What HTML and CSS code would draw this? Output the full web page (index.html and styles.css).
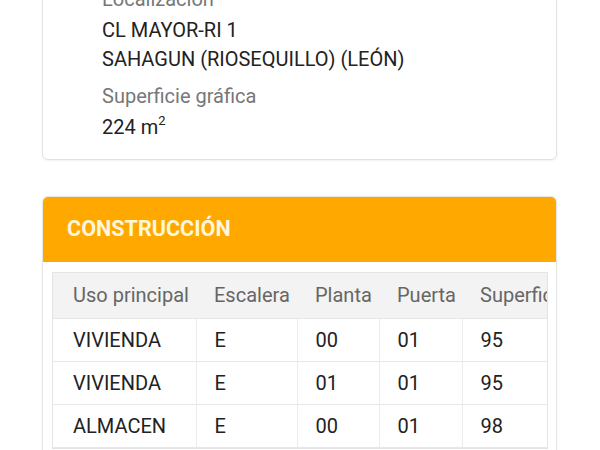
FILE: index.html
```html
<!DOCTYPE html>
<html lang="es">
<head>
<meta charset="utf-8">
<link rel="stylesheet" href="styles.css">
</head>
<body>
<div class="page">
  <section class="card info-card">
    <div class="field">
      <div class="label">Localización</div>
      <div class="value">CL MAYOR-RI 1<br>SAHAGUN (RIOSEQUILLO) (LEÓN)</div>
    </div>
    <div class="field">
      <div class="label">Superficie gráfica</div>
      <div class="value">224 m<sup>2</sup></div>
    </div>
  </section>

  <section class="card table-card">
    <header class="card-head">CONSTRUCCIÓN</header>
    <div class="card-body">
      <div class="table-wrap">
        <table class="data">
          <colgroup>
            <col class="c1"><col class="c2"><col class="c3"><col class="c4"><col class="c5">
          </colgroup>
          <thead>
            <tr><th>Uso principal</th><th>Escalera</th><th>Planta</th><th>Puerta</th><th>Superficie</th></tr>
          </thead>
          <tbody>
            <tr><td>VIVIENDA</td><td>E</td><td>00</td><td>01</td><td>95</td></tr>
            <tr><td>VIVIENDA</td><td>E</td><td>01</td><td>01</td><td>95</td></tr>
            <tr><td>ALMACEN</td><td>E</td><td>00</td><td>01</td><td>98</td></tr>
          </tbody>
        </table>
      </div>
    </div>
  </section>
</div>
</body>
</html>
```

FILE: styles.css
```css
* { box-sizing: border-box; }
html, body {
  margin: 0;
  padding: 0;
  background: #ffffff;
  overflow: hidden;
  height: 450px;
}
body {
  font-family: Roboto, "Noto Sans", "Liberation Sans", sans-serif;
  color: #212121;
}
.page {
  padding: 0 43px 0 42px;
  display: flex;
  flex-direction: column;
  gap: 36px;
}
.card {
  border: 1px solid #e2e2e2;
  border-radius: 6px;
  background: #fff;
  box-shadow: 0 1px 2px rgba(0,0,0,0.05);
}
.info-card {
  margin-top: -32px;
  padding: 16px 20px 17px 59px;
  display: flex;
  flex-direction: column;
  gap: 8px;
}
.field .label {
  font-size: 20px;
  line-height: 29px;
  color: #777777;
}
.field .value {
  font-size: 20px;
  line-height: 29px;
  margin-top: 2px;
  color: #222222;
}
.field sup {
  font-size: 13px;
  line-height: 0;
  vertical-align: 9px;
}
.table-card {
  overflow: hidden;
  border-color: #e6e6e6;
}
.card-head {
  background: #ffa800;
  height: 66px;
  display: flex;
  align-items: center;
  padding-left: 25px;
  padding-bottom: 1px;
  margin: -1px -1px 0 -1px;
  color: #fff6dc;
  font-weight: 700;
  font-size: 21.6px;
  border-radius: 6px 6px 0 0;
}
.card-body {
  padding: 10px 8px 20px 9px;
}
.table-wrap {
  border: 1px solid #e4e4e4;
  overflow: hidden;
}
.data {
  border-collapse: collapse;
  table-layout: fixed;
  width: 540px;
  font-size: 20px;
}
.data col.c1 { width: 143px; }
.data col.c2 { width: 101px; }
.data col.c3 { width: 82px; }
.data col.c4 { width: 83px; }
.data col.c5 { width: 131px; }
.data th, .data td {
  text-align: left;
  padding: 0 0 0 18px;
  white-space: nowrap;
  overflow: hidden;
}
.data td {
  border-left: 1px solid #ececec;
}
.data th:first-child, .data td:first-child {
  border-left: none;
  padding-left: 20px;
}
.data th {
  height: 45px;
  background: #f3f3f3;
  font-weight: 400;
  color: #666666;
  border-bottom: 1px solid #e6e6e6;
}
.data td {
  height: 43px;
  color: #222222;
  border-bottom: 1px solid #e8e8e8;
}
```
